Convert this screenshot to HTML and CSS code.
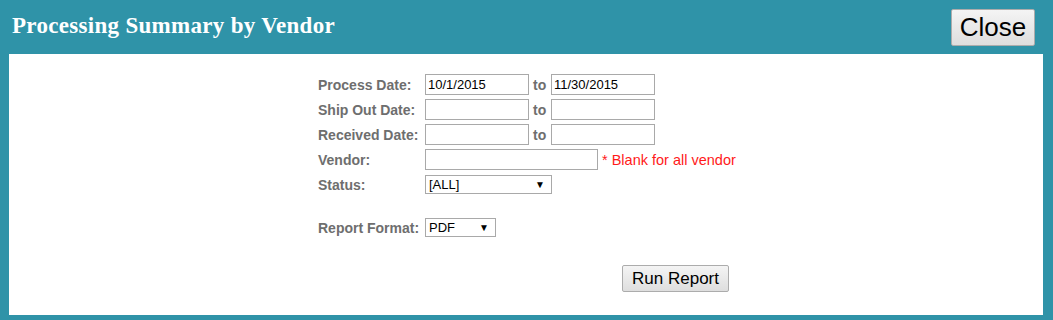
FILE: index.html
```html
<!DOCTYPE html>
<html lang="en">
<head>
    <meta charset="UTF-8">
    <title>Processing Summary by Vendor</title>
    <link rel="stylesheet" href="styles.css">
</head>
<body>

<div class="dialog">
    <div class="titlebar">
        <h1 class="title">Processing Summary by Vendor</h1>
        <button class="btn btn-close">Close</button>
    </div>
    <div class="panel">
        <div class="form">
            <div class="row">
                <label class="label">Process Date:</label>
                <input type="text" class="date" value="10/1/2015">
                <span class="to">to</span>
                <input type="text" class="date" value="11/30/2015">
            </div>
            <div class="row">
                <label class="label">Ship Out Date:</label>
                <input type="text" class="date">
                <span class="to">to</span>
                <input type="text" class="date">
            </div>
            <div class="row">
                <label class="label">Received Date:</label>
                <input type="text" class="date">
                <span class="to">to</span>
                <input type="text" class="date">
            </div>
            <div class="row">
                <label class="label">Vendor:</label>
                <input type="text" class="vendor">
                <span class="hint">* Blank for all vendor</span>
            </div>
            <div class="row">
                <label class="label">Status:</label>
                <div class="select status"><span>[ALL]</span><span class="arrow">&#9660;</span></div>
            </div>
            <div class="row row-gap"></div>
            <div class="row">
                <label class="label">Report Format:</label>
                <div class="select format"><span>PDF</span><span class="arrow">&#9660;</span></div>
            </div>
            <div class="actions">
                <button class="btn btn-run">Run Report</button>
            </div>
        </div>
    </div>
</div>

</body>
</html>
```

FILE: styles.css
```css
body {
    margin: 0;
    font-family: "Liberation Sans", Arial, sans-serif;
    background-color: #2f93a8;
}
.dialog {
    width: 1053px;
    height: 320px;
    display: flex;
    flex-direction: column;
}
.titlebar {
    height: 54px;
    display: flex;
    justify-content: space-between;
    align-items: flex-start;
    padding: 0 18px 0 12px;
    box-sizing: border-box;
}
.title {
    margin: 13px 0 0 0;
    font-family: "Liberation Serif", "Times New Roman", serif;
    font-size: 23px;
    font-weight: bold;
    color: #ffffff;
    letter-spacing: 0.3px;
}
.btn {
    font-family: "Liberation Sans", Arial, sans-serif;
    color: #000;
    background: linear-gradient(#f4f4f4, #dedede);
    border: 1px solid #acacac;
    border-radius: 2px;
    padding: 0;
    cursor: pointer;
}
.btn-close {
    margin-top: 9px;
    width: 84px;
    height: 37px;
    font-size: 26px;
}
.panel {
    margin: 0 10px 5px 9px;
    height: 261px;
    background-color: #ffffff;
}
.form {
    width: 416px;
    margin: 0 auto;
    padding-top: 18px;
}
.row {
    display: flex;
    align-items: center;
    height: 25px;
}
.row > * {
    flex-shrink: 0;
}
.row-gap {
    height: 18px;
}
.label {
    width: 107px;
    font-size: 14px;
    font-weight: bold;
    color: #6e6e6e;
    white-space: nowrap;
}
input[type="text"] {
    height: 21px;
    box-sizing: border-box;
    border: 1px solid #a9a9a9;
    padding: 1px 2px;
    font-family: "Liberation Sans", Arial, sans-serif;
    font-size: 13px;
    margin: 0;
}
.date {
    width: 104px;
}
.vendor {
    width: 173px;
}
.to {
    width: 22px;
    box-sizing: border-box;
    padding-left: 4px;
    font-size: 14px;
    font-weight: bold;
    color: #6e6e6e;
}
.hint {
    margin-left: 4px;
    font-size: 14.5px;
    color: #ff1a1a;
    white-space: nowrap;
}
.select {
    height: 19px;
    box-sizing: border-box;
    border: 1px solid #a9a9a9;
    display: flex;
    justify-content: space-between;
    align-items: center;
    padding: 0 6px 0 3px;
    font-size: 13px;
    color: #000;
}
.select .arrow {
    font-size: 10px;
}
.status {
    width: 127px;
}
.format {
    width: 71px;
}
.actions {
    display: flex;
    justify-content: flex-end;
    padding: 25px 5px 0 0;
}
.btn-run {
    width: 107px;
    height: 27px;
    font-size: 17px;
}
```
